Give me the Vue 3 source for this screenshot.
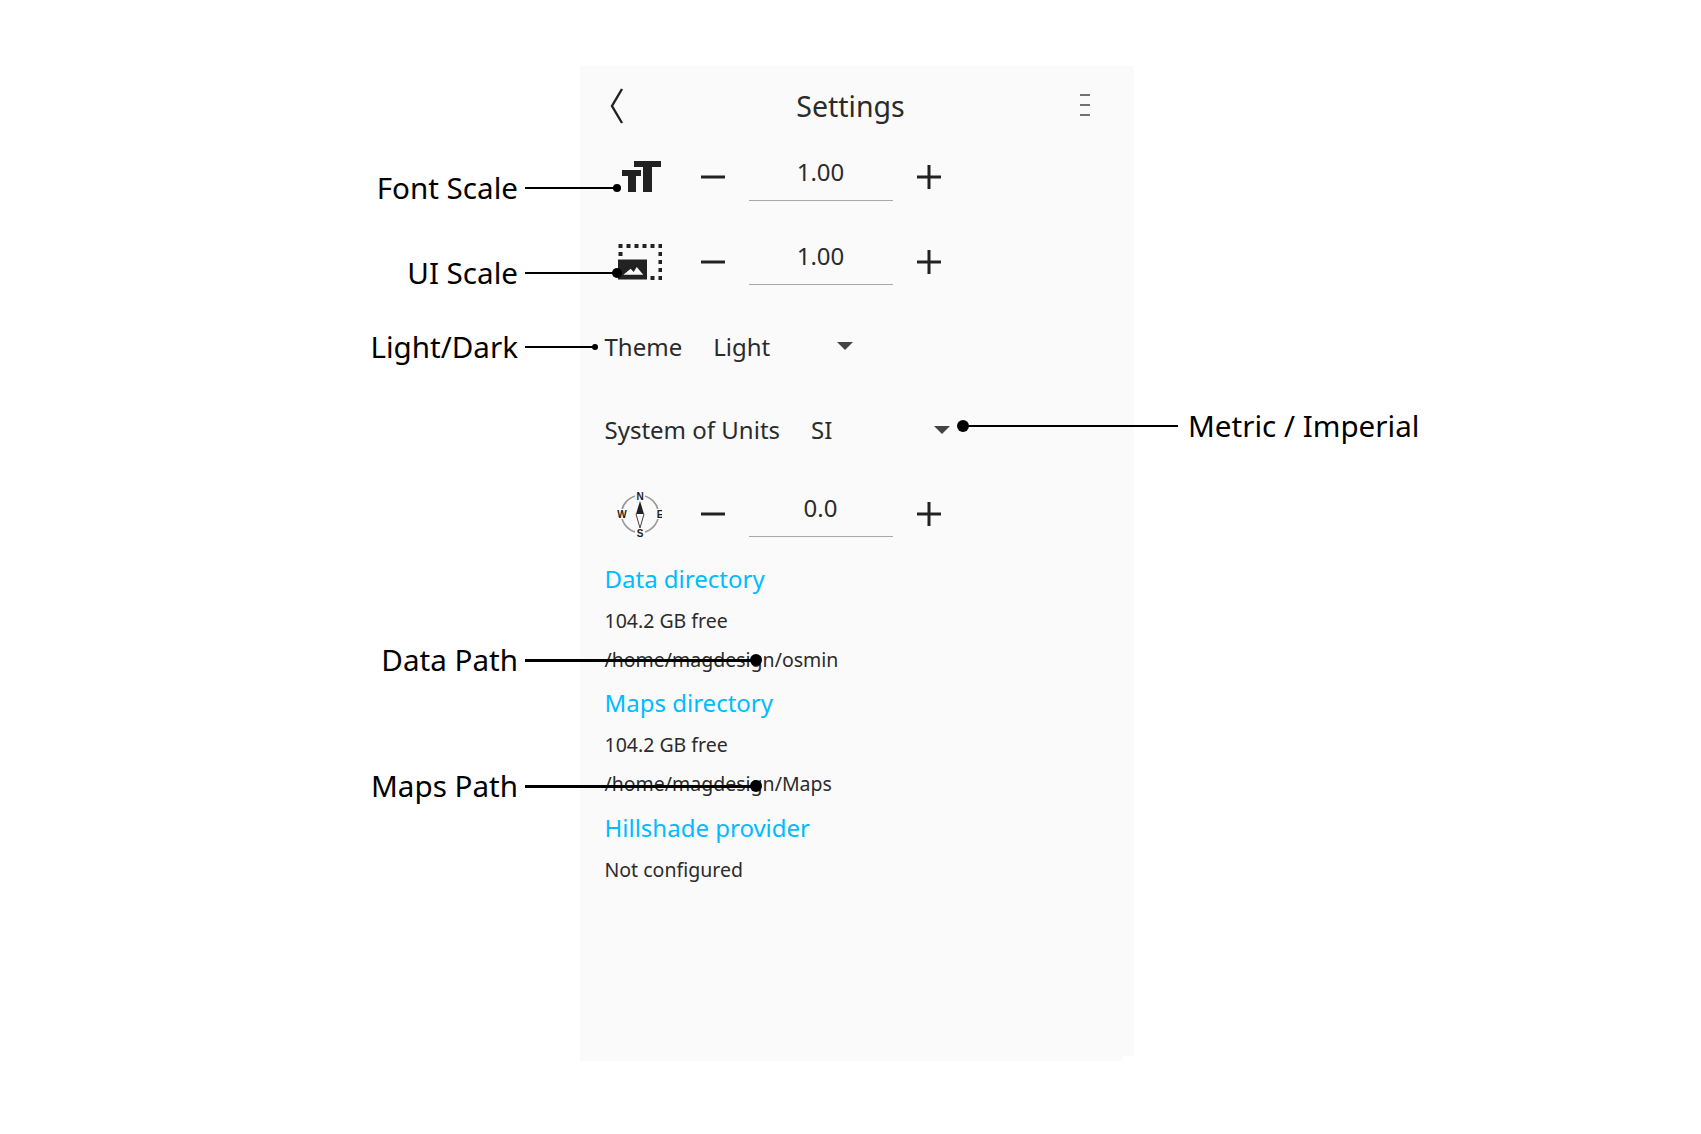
<script setup>
const callouts = [
  { text: 'Font Scale', y: 188, x2: 617, r: 4, h: 1.5 },
  { text: 'UI Scale', y: 273, x2: 617, r: 5, h: 2 },
  { text: 'Light/Dark', y: 347, x2: 595, r: 3, h: 1.5 },
  { text: 'Data Path', y: 660, x2: 756, r: 6, h: 3 },
  { text: 'Maps Path', y: 786, x2: 756, r: 6, h: 3 }
]

// dotted frame of the ui scale icon
const frameDots = [
  [4.5, 2], [12.5, 2], [20.5, 2], [28.5, 2], [36.5, 2], [44.5, 2],
  [4.5, 10], [44.5, 10], [44.5, 18], [44.5, 26], [44.5, 34], [36.5, 34]
]
</script>

<template>
  <div class="page">
    <div class="panel">
      <header class="topbar">
        <svg class="back" width="16" height="36" viewBox="0 0 16 36">
          <path d="M13 1 3 18l10 17" fill="none" stroke="#222" stroke-width="2.4" />
        </svg>
        <h1>Settings</h1>
        <svg class="menu" width="10" height="22" viewBox="0 0 10 22">
          <path d="M0 1h10M0 11h10M0 21h10" stroke="#444" stroke-width="1.5" />
        </svg>
      </header>

      <div class="stepper">
        <svg class="ico" width="48" height="40" viewBox="0 0 48 40">
          <path d="M8 13h19v6h-5v16h-8V19H8zM20 4h27v6h-9v25h-9V10h-9z" fill="#222" />
        </svg>
        <button class="step">
          <svg width="26" height="26" viewBox="0 0 26 26"><path d="M1 13h24" stroke="#222" stroke-width="3" /></svg>
        </button>
        <div class="field">1.00</div>
        <button class="step">
          <svg width="26" height="26" viewBox="0 0 26 26"><path d="M1 13h24M13 1v24" stroke="#222" stroke-width="3" /></svg>
        </button>
      </div>

      <div class="stepper">
        <svg class="ico" width="48" height="40" viewBox="0 0 48 40">
          <rect v-for="d in frameDots" :key="d.join()" :x="d[0]" :y="d[1]" width="4" height="4" fill="#222" />
          <path d="M4 17.5h29v20H4z" fill="#222" />
          <path d="m9.3 32.8 7.4-6 3 3.2 3-5 6.6 7.8z" fill="#fafafa" />
        </svg>
        <button class="step">
          <svg width="26" height="26" viewBox="0 0 26 26"><path d="M1 13h24" stroke="#222" stroke-width="3" /></svg>
        </button>
        <div class="field">1.00</div>
        <button class="step">
          <svg width="26" height="26" viewBox="0 0 26 26"><path d="M1 13h24M13 1v24" stroke="#222" stroke-width="3" /></svg>
        </button>
      </div>

      <div class="select-row theme">
        <span class="sel-label">Theme</span>
        <span class="sel-value">Light</span>
        <i class="caret"></i>
      </div>

      <div class="select-row units">
        <span class="sel-label">System of Units</span>
        <span class="sel-value">SI</span>
        <i class="caret"></i>
      </div>

      <div class="stepper compass-row">
        <svg class="ico" width="48" height="48" viewBox="-2 0 48 48">
          <circle cx="24" cy="24" r="18.5" fill="none" stroke="#999" stroke-width="1.6" />
          <path d="M24 11 20 24h8z" fill="#222" />
          <path d="m20 24 4 14 4-14" fill="#fafafa" stroke="#444" stroke-width="1" />
          <g class="cardinals">
            <rect x="19" y="1" width="10" height="9" fill="#fafafa" />
            <rect x="19" y="39" width="10" height="8" fill="#fafafa" />
            <rect x="1" y="19" width="10" height="10" fill="#fafafa" />
            <rect x="40" y="19" width="6" height="10" fill="#fafafa" />
            <text x="24" y="9.6">N</text>
            <text x="24" y="46.6">S</text>
            <text x="6" y="27.6">W</text>
            <text x="44" y="27.6">E</text>
          </g>
        </svg>
        <button class="step">
          <svg width="26" height="26" viewBox="0 0 26 26"><path d="M1 13h24" stroke="#222" stroke-width="3" /></svg>
        </button>
        <div class="field">0.0</div>
        <button class="step">
          <svg width="26" height="26" viewBox="0 0 26 26"><path d="M1 13h24M13 1v24" stroke="#222" stroke-width="3" /></svg>
        </button>
      </div>

      <section class="dirs">
        <a class="link">Data directory</a>
        <p class="free">104.2 GB free</p>
        <p>/home/magdesign/osmin</p>
        <a class="link">Maps directory</a>
        <p class="free">104.2 GB free</p>
        <p>/home/magdesign/Maps</p>
        <a class="link">Hillshade provider</a>
        <p class="free">Not configured</p>
      </section>
    </div>

    <!-- annotations drawn on top of the screenshot -->
    <template v-for="c in callouts" :key="c.text">
      <span class="note-label" :style="{ top: c.y - 21 + 'px' }">{{ c.text }}</span>
      <span class="note-line" :style="{ top: c.y - c.h / 2 + 'px', width: c.x2 - 525 + 'px', height: c.h + 'px' }"></span>
      <span class="note-dot" :style="{ top: c.y - c.r + 'px', left: c.x2 - c.r + 'px', width: c.r * 2 + 'px', height: c.r * 2 + 'px' }"></span>
    </template>
    <span class="note-line metric-line"></span>
    <span class="note-dot metric-dot"></span>
    <span class="note-label metric-label">Metric / Imperial</span>
  </div>
</template>

<style>
html, body { background: #fff; }
</style>

<style scoped>
.page {
  position: relative;
  width: 1701px;
  height: 1134px;
  box-sizing: border-box;
  padding: 66px 0 0 580px;
  overflow: hidden;
  font-family: "Noto Sans", sans-serif;
  color: #2b2b2b;
}

.panel {
  position: relative;
  width: 554px;
  height: 990px;
  background: #fafafa;
  box-sizing: border-box;
  padding-left: 24.5px;
}
.panel::after {
  content: "";
  position: absolute;
  left: 0;
  bottom: -5px;
  width: 542px;
  height: 5px;
  background: #fafafa;
}

.topbar {
  position: relative;
  height: 69px;
  display: flex;
  align-items: center;
  justify-content: center;
  margin-left: -24.5px;
  padding-right: 13px;
}
.topbar h1 {
  margin: 0;
  padding-top: 11px;
  font-size: 28.5px;
  font-weight: 400;
  line-height: 40px;
  color: #2b2b2b;
}
.back { position: absolute; left: 29px; top: 22px; }
.menu { position: absolute; left: 500px; top: 28px; }

.stepper {
  display: flex;
  align-items: center;
  gap: 12px;
  height: 84.5px;
}
.compass-row { height: 84px; }
.ico { flex: none; margin: 0 15px 0 9px; }
.step {
  flex: none;
  width: 48px;
  margin: 0;
  padding: 0;
  border: none;
  background: none;
  display: flex;
  align-items: center;
  justify-content: center;
}
.field {
  flex: none;
  width: 144px;
  height: 46px;
  border-bottom: 1px solid #a8a8a8;
  text-align: center;
  font-size: 24px;
  line-height: 36px;
  box-sizing: content-box;
}

.select-row {
  display: flex;
  align-items: center;
  height: 84px;
  font-size: 24px;
}
.units { height: 83.5px; }
.sel-value { margin-left: 31px; }
.caret {
  width: 0;
  height: 0;
  border: 8px solid transparent;
  border-top: 8px solid #444;
  border-bottom: none;
}
.theme .caret { margin-left: 67px; }
.units .caret { margin-left: 102px; }

.cardinals text {
  font-family: "Liberation Sans", sans-serif;
  font-size: 10px;
  font-weight: 700;
  text-anchor: middle;
  fill: #222;
}

.dirs { margin-top: -1px; }
.link {
  display: block;
  font-size: 24px;
  line-height: 47px;
  color: #00bcff;
}
.dirs p {
  margin: 0;
  font-size: 19.5px;
  line-height: 39.5px;
  color: #2b2b2b;
}
.dirs .free { line-height: 38px; }

.note-label {
  position: absolute;
  right: 1183px;
  font-size: 29.6px;
  line-height: 42px;
  color: #000;
  white-space: nowrap;
}
.note-line {
  position: absolute;
  left: 525px;
  background: #000;
}
.note-dot {
  position: absolute;
  border-radius: 50%;
  background: #000;
}
.metric-line { left: 963px; top: 425px; width: 215px; height: 2px; }
.metric-dot { left: 957px; top: 420px; width: 12px; height: 12px; }
.metric-label { left: 1188px; right: auto; top: 405px; }
</style>
